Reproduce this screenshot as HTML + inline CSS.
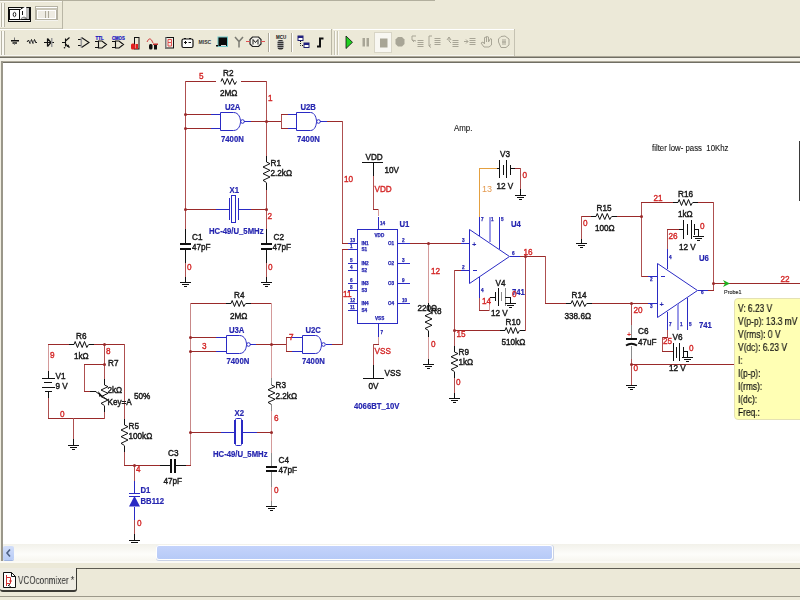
<!DOCTYPE html>
<html><head><meta charset="utf-8">
<style>
html,body{margin:0;padding:0;width:800px;height:600px;overflow:hidden;background:#ECE9D8;font-family:"Liberation Sans",sans-serif;}
#root{position:relative;width:800px;height:600px;overflow:hidden;}
.a{position:absolute;}
svg text{font-family:"Liberation Sans",sans-serif;}
#probe{left:734px;top:298px;width:80px;height:122px;background:#FFFFB4;border:1px solid #E4E1B4;border-radius:4px;box-sizing:border-box;}
#probe div{will-change:transform;position:absolute;left:3px;font-size:10px;color:#111;-webkit-text-stroke:0.2px #111;transform-origin:0 0;transform:scaleX(0.84);white-space:nowrap;}
</style></head><body><div id="root">
<svg class="a" style="left:0;top:0" width="800" height="61" shape-rendering="crispEdges">
<rect x="0" y="0" width="800" height="61" fill="#ECE9D8"/>
<!-- row1 -->
<rect x="0" y="0" width="435" height="1" fill="#B2AF9E"/>
<rect x="0" y="1" width="62" height="1" fill="#FAF9F4"/>
<rect x="62" y="1" width="1" height="28" fill="#B9B6A5"/>
<rect x="0" y="28" width="62" height="1" fill="#C9C6B6"/>
<rect x="0" y="3" width="1" height="24" fill="#F8F6EE"/><rect x="1" y="3" width="1" height="24" fill="#B8B5A6"/><rect x="2" y="3" width="2" height="24" fill="#FAF9F3"/><rect x="4" y="3" width="1" height="24" fill="#B8B5A6"/>
<!-- toggle icon -->
<rect x="8" y="7" width="23" height="15" fill="#0C0C0C"/>
<rect x="9" y="8" width="12" height="1" fill="#F4F4F4"/>
<rect x="10" y="10" width="9" height="9" fill="#FFFFFF"/>
<rect x="9" y="20" width="21" height="1" fill="#F4F4F4"/>
<path d="M20,10 L25.5,6.5 L26.3,7 L26,18.5 L20,19.2 Z" fill="#FFFFFF" shape-rendering="auto"/>
<rect x="26" y="8" width="3" height="11" fill="#BDBDBD"/>
<rect x="22" y="11" width="1" height="4" fill="#111"/>
<path d="M21,18.5 L24,17 L27,18.5" stroke="#555" stroke-width="0.8" fill="none" shape-rendering="auto"/>
<ellipse cx="14.5" cy="14.5" rx="1.3" ry="2.2" stroke="#111" stroke-width="0.9" fill="none" shape-rendering="auto"/>
<!-- grayed icon -->
<rect x="35" y="6" width="23" height="15" fill="#B5B2A3"/>
<rect x="36" y="7" width="21" height="1" fill="#FFFFFF"/>
<rect x="36" y="8" width="21" height="2" fill="#C8C5B7"/>
<rect x="37" y="10" width="19" height="9" fill="#FFFFFF"/>
<rect x="38" y="11" width="17" height="7" fill="#EEECE3"/>
<rect x="45" y="11" width="1" height="7" fill="#ACA899"/><rect x="48" y="11" width="1" height="7" fill="#ACA899"/>
<rect x="35" y="20" width="23" height="1" fill="#F4F3EE"/>
<!-- row2 toolbar 2 -->
<rect x="0" y="29" width="331" height="1" fill="#FFFFFF"/>
<rect x="333" y="29" width="181" height="1" fill="#FFFFFF"/>
<rect x="331" y="29" width="1" height="27" fill="#B9B6A5"/>
<rect x="514" y="29" width="1" height="27" fill="#C5C2B2"/>
<rect x="0" y="55" width="514" height="1" fill="#F7F6F0"/>
<rect x="0" y="31" width="1" height="24" fill="#F8F6EE"/><rect x="1" y="31" width="1" height="24" fill="#B8B5A6"/><rect x="2" y="31" width="2" height="24" fill="#FAF9F3"/><rect x="4" y="31" width="1" height="24" fill="#B8B5A6"/>
<rect x="334" y="31" width="1" height="24" fill="#C6C3B3"/><rect x="335" y="31" width="1" height="24" fill="#FBFAF6"/><rect x="337" y="31" width="1" height="24" fill="#C6C3B3"/><rect x="338" y="31" width="1" height="24" fill="#FBFAF6"/>
<rect x="268" y="33" width="1" height="19" fill="#ACA899"/><rect x="269" y="33" width="1" height="19" fill="#FFFFFF"/>
<rect x="291" y="33" width="1" height="19" fill="#ACA899"/><rect x="292" y="33" width="1" height="19" fill="#FFFFFF"/>
<rect x="0" y="56" width="800" height="1" fill="#ACA899"/>
<rect x="0" y="57" width="800" height="1" fill="#716F64"/>
<rect x="0" y="58" width="800" height="3" fill="#F5F3EA"/>
<g shape-rendering="auto">
<!-- ground -->
<path d="M14.5,37.5 V40" stroke="#777" stroke-width="1"/>
<rect x="11" y="40" width="8" height="1.5" fill="#111"/>
<rect x="12.5" y="42.3" width="4.5" height="1.4" fill="#111"/>
<path d="M14.5,43.5 V45" stroke="#888" stroke-width="1"/>
<!-- resistor -->
<polyline points="27,42 28.5,40 30,43.5 31.5,39.5 33,43.5 34.5,39.5 36,43 37,42" stroke="#1A1A1A" stroke-width="1" fill="none"/><path d="M30.5,40.5 V43 M33.5,40.5 V43" stroke="#999" stroke-width="0.8"/>
<!-- diode -->
<path d="M44,42.5 H54 M47.5,38.5 V46.5 M47.5,38.5 L51,42.5 L47.5,46.5" stroke="#111" stroke-width="1.2" fill="none"/>
<rect x="51" y="38" width="1.5" height="9" fill="#999"/>
<!-- transistor -->
<path d="M62,42.5 H65.5 M65.5,38.5 V46.5 M65.5,41 L69.5,37.5 M65.5,44 L69.5,47.5" stroke="#111" stroke-width="1.1" fill="none"/>
<path d="M69.5,47.5 L66.5,46.5 L68.5,44.5 Z" fill="#111"/>
<circle cx="64.5" cy="47.8" r="0.8" fill="#111"/>
<!-- opamp -->
<path d="M78,39.5 H81.5 M78,45.5 H81.5 M81.5,37.5 L89,42.5 L81.5,47.5" stroke="#111" stroke-width="1.1" fill="none"/>
<rect x="80.5" y="37.5" width="1.6" height="10" fill="#9A9A9A"/>
<!-- TTL -->
<text x="95.5" y="40" font-size="5" font-weight="bold" fill="#1010C0" font-family="Liberation Sans" stroke="#1010C0" stroke-width="0.2" transform="translate(95.5,0) scale(0.9,1) translate(-95.5,0)">TTL</text>
<path d="M95,41.5 H98.5 M95,47.5 H98.5 M98.5,41 H102 L106.5,44.5 L102,48 H98.5 Z" stroke="#111" stroke-width="1.1" fill="none"/>
<text x="112" y="40" font-size="5" font-weight="bold" fill="#1010C0" font-family="Liberation Sans" stroke="#1010C0" stroke-width="0.2" transform="translate(112,0) scale(0.85,1) translate(-112,0)">CMOS</text>
<path d="M112,41.5 H115.5 M112,47.5 H115.5 M115.5,41 H119 L123.5,44.5 L119,48 H115.5 Z" stroke="#111" stroke-width="1.1" fill="none"/>
<!-- indicator -->
<rect x="134.5" y="37.5" width="4.5" height="11.5" fill="none" stroke="#111" stroke-width="1"/>
<rect x="131" y="43.5" width="4" height="6" rx="1.5" fill="#E02020"/>
<rect x="135.5" y="44" width="2.5" height="5" fill="#E02020"/>
<!-- relay -->
<path d="M147,42 Q150,35 153,43" stroke="#D04040" stroke-width="1" fill="none"/>
<rect x="149" y="44" width="3.5" height="5.5" rx="1.5" fill="#111"/>
<rect x="154" y="44" width="3" height="5.5" fill="#111"/><rect x="153" y="43.5" width="5" height="1.5" fill="#C03030"/>
<!-- 7seg -->
<rect x="165.5" y="37.5" width="8" height="10.5" fill="#F0EEE6" stroke="#111" stroke-width="1"/>
<rect x="165" y="37" width="1.5" height="11.5" fill="#777"/>
<path d="M168,39.5 H171.5 V42.5 H168 Z M168,42.5 V46 H171.5 V42.5" stroke="#E04040" stroke-width="0.9" fill="none"/>
<!-- battery box -->
<rect x="182" y="39" width="11" height="8.5" rx="1.5" fill="#fff" stroke="#111" stroke-width="1.2"/>
<path d="M184,38.5 H186 M189,38.5 H191 M184,42.5 H187 M185.5,41 V44 M188.5,42.5 H191" stroke="#111" stroke-width="1"/>
<!-- MISC -->
<text x="198.5" y="44" font-size="6.2" font-weight="bold" fill="#333" font-family="Liberation Sans" transform="translate(198.5,0) scale(0.82,1) translate(-198.5,0)">MISC</text>
<!-- black square -->
<rect x="218" y="37" width="9.5" height="9.5" fill="#0A0A0A" stroke="#6FC8C8" stroke-width="1"/>
<rect x="221" y="45" width="5" height="1" fill="#ddd"/>
<rect x="216" y="45" width="2" height="1.5" fill="#111"/>
<!-- antenna -->
<path d="M235,37 L239,41.5 L243,37 M239,41.5 V47.5" stroke="#7A7A72" stroke-width="1.5" fill="none"/>
<!-- motor -->
<path d="M252.5,37 H258.5 L261,39.5 V44 L258.5,46.5 H252.5 L250,44 V39.5 Z" fill="#F3F2EC" stroke="#222" stroke-width="1.2"/>
<path d="M253,44.5 V39.5 L255.5,42.5 L258,39.5 V44.5" stroke="#222" stroke-width="1" fill="none"/>
<path d="M246,41.5 H250 M261,41.5 H265" stroke="#E05050" stroke-width="1"/>
<!-- MCU -->
<text x="276" y="39" font-size="4.5" font-weight="bold" fill="#111" font-family="Liberation Sans">MCU</text>
<rect x="277.5" y="40" width="6" height="9.5" rx="2" fill="#333"/>
<path d="M276.5,41.5 H284.5 M276.5,43.5 H284.5 M276.5,45.5 H284.5 M276.5,47.5 H284.5" stroke="#DDD" stroke-width="0.6"/>
<!-- hierarchy -->
<rect x="298" y="36" width="5" height="4.5" fill="#fff" stroke="#202070" stroke-width="1"/><rect x="298" y="36" width="5" height="2" fill="#202080"/>
<rect x="304" y="43" width="5" height="4.5" fill="#fff" stroke="#202070" stroke-width="1"/><rect x="304" y="43" width="5" height="2" fill="#202080"/>
<path d="M300.5,41 V45.5 H304" stroke="#111" stroke-width="1" stroke-dasharray="1,1" fill="none"/>
<!-- step -->
<path d="M317,46.5 H320 V38.5 H323.5" stroke="#111" stroke-width="2" fill="none"/>
<!-- play -->
<path d="M346,36 L352.5,42.3 L346,48.5 Z" fill="#1FD11F" stroke="#111" stroke-width="0.8"/>
<!-- pause -->
<rect x="362.5" y="38" width="2.5" height="8.5" fill="#A8A596"/><rect x="366.5" y="38" width="2.5" height="8.5" fill="#A8A596"/>
<!-- stop pressed -->
<rect x="374.5" y="32.5" width="17" height="20" fill="#F8F7F2" stroke="#D8D5C6" stroke-width="1"/>
<rect x="380" y="38.5" width="7.5" height="9" fill="#A8A596"/>
<!-- octagon -->
<path d="M398,37 H402 L404.5,39.5 V44 L402,46.5 H398 L395.5,44 V39.5 Z" fill="#A8A596"/>
<!-- debug icons -->
<g stroke="#A8A596" stroke-width="1" fill="none">
<path d="M416,36 H412 V40 L414,42 M412,40 L416,41"/>
<path d="M417.5,40.5 H423.5 M417.5,42.5 H423.5 M417.5,44.5 H423.5 M417.5,46.5 H423.5"/>
<path d="M432,36 H429 V46 L431,47.5 M429,46 L431,44.5"/>
<path d="M434.5,38.5 H440.5 M434.5,40.5 H440.5 M434.5,42.5 H440.5 M434.5,44.5 H440.5"/>
<path d="M447,40 L449,37 L451,40 M449,37 V41 L451,43"/>
<path d="M452.5,40.5 H458.5 M452.5,42.5 H458.5 M452.5,44.5 H458.5 M452.5,46.5 H458.5"/>
<path d="M464,41.5 H468 M466,39.5 L468,41.5 L466,43.5"/>
<path d="M469.5,38.5 H475.5 M469.5,40.5 H475.5 M469.5,42.5 H475.5 M469.5,44.5 H475.5"/>
<path d="M484,47 L481,43 L483,42 L484.5,44 V37.5 L486.5,37 V42 V36.5 L488.5,37 V42 L490.5,38.5 L491.5,39 V45 L489,47 Z"/>
<path d="M501,47.5 L498.5,42 V39 L501,36.5 L505,36 L509,39 V45 L506,47.5 Z M503,39 V45 M505,39 V45 M502,42 L506,42"/>
</g>
</g>
</svg>

<div class="a" style="left:0;top:61px;width:800px;height:2px;background:#ACA899"></div>
<div class="a" style="left:0;top:62px;width:800px;height:1px;background:#716F64"></div>
<div class="a" style="left:0;top:61px;width:1px;height:501px;background:#F1EFE2"></div>
<div class="a" style="left:1px;top:61px;width:2px;height:501px;background:#9A978A"></div>
<div class="a" style="left:3px;top:63px;width:797px;height:481px;background:#fff"></div>
<svg class="a" style="left:0;top:0;will-change:transform" width="800" height="544" viewBox="0 0 800 544" shape-rendering="auto">
<defs><clipPath id="cp"><rect x="3" y="63" width="797" height="481"/></clipPath></defs>
<g clip-path="url(#cp)">
<rect x="185" y="81" width="31" height="1" fill="#9A2A2A"/>
<polyline points="221,81.5 222.25,78.5 224.75,84.5 227.25,78.5 229.75,84.5 232.25,78.5 234.75,84.5 236.5,81.5" stroke="#101010" stroke-width="1" fill="none" stroke-linejoin="miter"/>
<rect x="241" y="81" width="26" height="1" fill="#9A2A2A"/>
<rect x="185" y="81" width="1" height="148" fill="#AE5050"/>
<rect x="185" y="229" width="1" height="15" fill="#101010"/>
<rect x="186" y="114" width="25" height="1" fill="#9A2A2A"/>
<rect x="211" y="114" width="9" height="1" fill="#2A2AC4"/>
<rect x="186" y="128" width="25" height="1" fill="#9A2A2A"/>
<rect x="211" y="128" width="9" height="1" fill="#2A2AC4"/>
<path d="M220.5,112.5 H233.5 C239,112.5 240.5,118.5 240.5,121.5 C240.5,124.5 239,130.5 233.5,130.5 H220.5 Z" stroke="#2A2AC4" fill="none" stroke-width="1"/>
<circle cx="242.5" cy="121.5" r="1.8" stroke="#2A2AC4" fill="none" stroke-width="1"/>
<rect x="244" y="121" width="7" height="1" fill="#2A2AC4"/>
<rect x="251" y="121" width="31" height="1" fill="#9A2A2A"/>
<rect x="266" y="81" width="1" height="75" fill="#AE5050"/>
<rect x="266" y="156" width="1" height="6" fill="#101010"/>
<polyline points="266.5,162 270.0,163.66666666666666 263.0,167.0 270.0,170.33333333333334 263.0,173.66666666666666 270.0,177.0 263.0,180.33333333333334 266.5,182.5" stroke="#101010" stroke-width="1" fill="none" stroke-linejoin="miter"/>
<rect x="266" y="183" width="1" height="7" fill="#101010"/>
<rect x="266" y="190" width="1" height="39" fill="#AE5050"/>
<rect x="266" y="229" width="1" height="15" fill="#101010"/>
<rect x="281" y="114" width="1" height="15" fill="#AE5050"/>
<rect x="281" y="114" width="7" height="1" fill="#9A2A2A"/>
<rect x="288" y="114" width="8" height="1" fill="#2A2AC4"/>
<rect x="281" y="128" width="7" height="1" fill="#9A2A2A"/>
<rect x="288" y="128" width="8" height="1" fill="#2A2AC4"/>
<path d="M296.5,112.5 H310.5 C315,112.5 316.5,118.5 316.5,121.5 C316.5,124.5 315,130.5 310.5,130.5 H296.5 Z" stroke="#2A2AC4" fill="none" stroke-width="1"/>
<circle cx="318.5" cy="121.5" r="1.8" stroke="#2A2AC4" fill="none" stroke-width="1"/>
<rect x="320" y="121" width="7" height="1" fill="#2A2AC4"/>
<rect x="327" y="121" width="16" height="1" fill="#9A2A2A"/>
<rect x="342" y="121" width="1" height="123" fill="#AE5050"/>
<rect x="342" y="243" width="6" height="1" fill="#9A2A2A"/>
<rect x="185" y="209" width="31" height="1" fill="#9A2A2A"/>
<rect x="216" y="209" width="14" height="1" fill="#2A2AC4"/>
<rect x="229" y="198" width="1" height="22" fill="#2A2AC4"/>
<rect x="238" y="198" width="1" height="22" fill="#2A2AC4"/>
<rect x="231.5" y="195.5" width="4" height="27" stroke="#2A2AC4" fill="none"/>
<rect x="239" y="209" width="12" height="1" fill="#2A2AC4"/>
<rect x="251" y="209" width="16" height="1" fill="#9A2A2A"/>
<rect x="180" y="243" width="11" height="2" fill="#101010"/>
<rect x="180" y="248" width="11" height="2" fill="#101010"/>
<rect x="185" y="250" width="1" height="13" fill="#101010"/>
<rect x="185" y="263" width="1" height="14" fill="#AE5050"/>
<rect x="185" y="277" width="1" height="6" fill="#101010"/>
<rect x="180" y="282" width="11" height="1" fill="#101010"/>
<rect x="182" y="284" width="7" height="1" fill="#101010"/>
<rect x="184" y="286" width="3" height="1" fill="#101010"/>
<rect x="261" y="243" width="11" height="2" fill="#101010"/>
<rect x="261" y="248" width="11" height="2" fill="#101010"/>
<rect x="266" y="250" width="1" height="13" fill="#101010"/>
<rect x="266" y="263" width="1" height="14" fill="#AE5050"/>
<rect x="266" y="277" width="1" height="6" fill="#101010"/>
<rect x="261" y="282" width="11" height="1" fill="#101010"/>
<rect x="263" y="284" width="7" height="1" fill="#101010"/>
<rect x="265" y="286" width="3" height="1" fill="#101010"/>
<text transform="translate(199,78.5) scale(0.87,1)" fill="#D42828" font-size="9.4" stroke="#D42828" stroke-width="0.4">5</text>
<text transform="translate(223,75.5) scale(0.87,1)" fill="#1A1A1A" font-size="9.4" stroke="#1A1A1A" stroke-width="0.45">R2</text>
<text transform="translate(220,95.5) scale(0.87,1)" fill="#1A1A1A" font-size="9.4" stroke="#1A1A1A" stroke-width="0.45">2MΩ</text>
<text transform="translate(268,100.5) scale(0.87,1)" fill="#D42828" font-size="9.4" stroke="#D42828" stroke-width="0.4">1</text>
<text transform="translate(225,110) scale(0.86,1)" fill="#2626B0" font-size="9" font-weight="bold" stroke="#2626B0" stroke-width="0.2">U2A</text>
<text transform="translate(221,141.5) scale(0.86,1)" fill="#2626B0" font-size="9" font-weight="bold" stroke="#2626B0" stroke-width="0.2">7400N</text>
<text transform="translate(300.5,110) scale(0.86,1)" fill="#2626B0" font-size="9" font-weight="bold" stroke="#2626B0" stroke-width="0.2">U2B</text>
<text transform="translate(297,141.5) scale(0.86,1)" fill="#2626B0" font-size="9" font-weight="bold" stroke="#2626B0" stroke-width="0.2">7400N</text>
<text transform="translate(270.5,165.5) scale(0.87,1)" fill="#1A1A1A" font-size="9.4" stroke="#1A1A1A" stroke-width="0.45">R1</text>
<text transform="translate(270.5,176) scale(0.87,1)" fill="#1A1A1A" font-size="9.4" stroke="#1A1A1A" stroke-width="0.45">2.2kΩ</text>
<text transform="translate(229.5,192.5) scale(0.86,1)" fill="#2626B0" font-size="9" font-weight="bold" stroke="#2626B0" stroke-width="0.2">X1</text>
<text transform="translate(267.5,218.5) scale(0.87,1)" fill="#D42828" font-size="9.4" stroke="#D42828" stroke-width="0.4">2</text>
<text transform="translate(209,234) scale(0.86,1)" fill="#2626B0" font-size="9" font-weight="bold" stroke="#2626B0" stroke-width="0.2">HC-49/U_5MHz</text>
<text transform="translate(192,240) scale(0.87,1)" fill="#1A1A1A" font-size="9.4" stroke="#1A1A1A" stroke-width="0.45">C1</text>
<text transform="translate(192,249.5) scale(0.87,1)" fill="#1A1A1A" font-size="9.4" stroke="#1A1A1A" stroke-width="0.45">47pF</text>
<text transform="translate(187,269.5) scale(0.87,1)" fill="#D42828" font-size="9.4" stroke="#D42828" stroke-width="0.4">0</text>
<text transform="translate(273.5,240) scale(0.87,1)" fill="#1A1A1A" font-size="9.4" stroke="#1A1A1A" stroke-width="0.45">C2</text>
<text transform="translate(272.5,249.5) scale(0.87,1)" fill="#1A1A1A" font-size="9.4" stroke="#1A1A1A" stroke-width="0.45">47pF</text>
<text transform="translate(268,269.5) scale(0.87,1)" fill="#D42828" font-size="9.4" stroke="#D42828" stroke-width="0.4">0</text>
<text transform="translate(344,182) scale(0.87,1)" fill="#D42828" font-size="9.4" stroke="#D42828" stroke-width="0.4">10</text>
<rect x="190" y="303" width="36" height="1" fill="#9A2A2A"/>
<rect x="226" y="303" width="5" height="1" fill="#101010"/>
<polyline points="231,303.5 232.16666666666666,300.5 234.5,306.5 236.83333333333334,300.5 239.16666666666666,306.5 241.5,300.5 243.83333333333334,306.5 245.5,303.5" stroke="#101010" stroke-width="1" fill="none" stroke-linejoin="miter"/>
<rect x="246" y="303" width="5" height="1" fill="#101010"/>
<rect x="251" y="303" width="21" height="1" fill="#9A2A2A"/>
<rect x="190" y="303" width="1" height="163" fill="#C88888"/>
<rect x="191" y="337" width="25" height="1" fill="#9A2A2A"/>
<rect x="216" y="337" width="10" height="1" fill="#2A2AC4"/>
<rect x="191" y="351" width="25" height="1" fill="#9A2A2A"/>
<rect x="216" y="351" width="10" height="1" fill="#2A2AC4"/>
<path d="M226.5,335.5 H239.5 C245,335.5 246.5,341.5 246.5,344.5 C246.5,347.5 245,353.5 239.5,353.5 H226.5 Z" stroke="#2A2AC4" fill="none" stroke-width="1"/>
<circle cx="248.5" cy="344.5" r="1.8" stroke="#2A2AC4" fill="none" stroke-width="1"/>
<rect x="250" y="344" width="6" height="1" fill="#2A2AC4"/>
<rect x="256" y="344" width="31" height="1" fill="#9A2A2A"/>
<rect x="271" y="303" width="1" height="75" fill="#D49A9A"/>
<rect x="271" y="378" width="1" height="7" fill="#8C8C8C"/>
<polyline points="271.5,385 275.0,386.5833333333333 268.0,389.75 275.0,392.9166666666667 268.0,396.0833333333333 275.0,399.25 268.0,402.4166666666667 271.5,404.5" stroke="#101010" stroke-width="1" fill="none" stroke-linejoin="miter"/>
<rect x="271" y="405" width="1" height="6" fill="#8C8C8C"/>
<rect x="271" y="411" width="1" height="42" fill="#D49A9A"/>
<rect x="271" y="453" width="1" height="14" fill="#8C8C8C"/>
<rect x="286" y="337" width="1" height="15" fill="#AE5050"/>
<rect x="286" y="337" width="6" height="1" fill="#9A2A2A"/>
<rect x="292" y="337" width="10" height="1" fill="#2A2AC4"/>
<rect x="286" y="351" width="6" height="1" fill="#9A2A2A"/>
<rect x="292" y="351" width="10" height="1" fill="#2A2AC4"/>
<path d="M302.5,335.5 H315.5 C320,335.5 321.5,341.5 321.5,344.5 C321.5,347.5 320,353.5 315.5,353.5 H302.5 Z" stroke="#2A2AC4" fill="none" stroke-width="1"/>
<circle cx="323.5" cy="344.5" r="1.8" stroke="#2A2AC4" fill="none" stroke-width="1"/>
<rect x="326" y="344" width="6" height="1" fill="#2A2AC4"/>
<rect x="332" y="344" width="11" height="1" fill="#9A2A2A"/>
<rect x="342" y="249" width="1" height="96" fill="#AE5050"/>
<rect x="342" y="249" width="6" height="1" fill="#9A2A2A"/>
<rect x="190" y="432" width="31" height="1" fill="#9A2A2A"/>
<rect x="221" y="432" width="13" height="1" fill="#2A2AC4"/>
<rect x="235.5" y="418.5" width="6" height="27" rx="1" stroke="#2A2AC4" fill="none"/>
<rect x="234" y="420" width="1" height="24" fill="#2A2AC4"/>
<rect x="242" y="420" width="1" height="24" fill="#2A2AC4"/>
<rect x="243" y="432" width="14" height="1" fill="#2A2AC4"/>
<rect x="257" y="432" width="15" height="1" fill="#9A2A2A"/>
<rect x="266" y="466" width="11" height="2" fill="#101010"/>
<rect x="266" y="470" width="11" height="2" fill="#101010"/>
<rect x="271" y="472" width="1" height="15" fill="#8C8C8C"/>
<rect x="271" y="487" width="1" height="14" fill="#D49A9A"/>
<rect x="271" y="501" width="1" height="6" fill="#8C8C8C"/>
<rect x="266" y="506" width="11" height="1" fill="#101010"/>
<rect x="268" y="508" width="7" height="1" fill="#101010"/>
<rect x="270" y="510" width="3" height="1" fill="#101010"/>
<text transform="translate(234,297.5) scale(0.87,1)" fill="#1A1A1A" font-size="9.4" stroke="#1A1A1A" stroke-width="0.45">R4</text>
<text transform="translate(230,319) scale(0.87,1)" fill="#1A1A1A" font-size="9.4" stroke="#1A1A1A" stroke-width="0.45">2MΩ</text>
<text transform="translate(229,333) scale(0.86,1)" fill="#2626B0" font-size="9" font-weight="bold" stroke="#2626B0" stroke-width="0.2">U3A</text>
<text transform="translate(202,349) scale(0.87,1)" fill="#D42828" font-size="9.4" stroke="#D42828" stroke-width="0.4">3</text>
<text transform="translate(226.5,363.5) scale(0.86,1)" fill="#2626B0" font-size="9" font-weight="bold" stroke="#2626B0" stroke-width="0.2">7400N</text>
<text transform="translate(305.5,332.5) scale(0.86,1)" fill="#2626B0" font-size="9" font-weight="bold" stroke="#2626B0" stroke-width="0.2">U2C</text>
<text transform="translate(289,339.5) scale(0.87,1)" fill="#D42828" font-size="9.4" stroke="#D42828" stroke-width="0.4">7</text>
<text transform="translate(302,363.5) scale(0.86,1)" fill="#2626B0" font-size="9" font-weight="bold" stroke="#2626B0" stroke-width="0.2">7400N</text>
<text transform="translate(275.5,388) scale(0.87,1)" fill="#1A1A1A" font-size="9.4" stroke="#1A1A1A" stroke-width="0.45">R3</text>
<text transform="translate(275.5,399) scale(0.87,1)" fill="#1A1A1A" font-size="9.4" stroke="#1A1A1A" stroke-width="0.45">2.2kΩ</text>
<text transform="translate(274,420.5) scale(0.87,1)" fill="#D42828" font-size="9.4" stroke="#D42828" stroke-width="0.4">6</text>
<text transform="translate(234.5,415.5) scale(0.86,1)" fill="#2626B0" font-size="9" font-weight="bold" stroke="#2626B0" stroke-width="0.2">X2</text>
<text transform="translate(213,456.5) scale(0.86,1)" fill="#2626B0" font-size="9" font-weight="bold" stroke="#2626B0" stroke-width="0.2">HC-49/U_5MHz</text>
<text transform="translate(278.5,462.5) scale(0.87,1)" fill="#1A1A1A" font-size="9.4" stroke="#1A1A1A" stroke-width="0.45">C4</text>
<text transform="translate(278.5,472.5) scale(0.87,1)" fill="#1A1A1A" font-size="9.4" stroke="#1A1A1A" stroke-width="0.45">47pF</text>
<text transform="translate(274,493) scale(0.87,1)" fill="#D42828" font-size="9.4" stroke="#D42828" stroke-width="0.4">0</text>
<text transform="translate(343,297) scale(0.87,1)" fill="#D42828" font-size="9.4" stroke="#D42828" stroke-width="0.4">11</text>
<rect x="48" y="344" width="1" height="27" fill="#D49A9A"/>
<rect x="48" y="371" width="1" height="8" fill="#101010"/>
<rect x="42" y="378" width="13" height="1" fill="#101010"/>
<rect x="44" y="382" width="8" height="1" fill="#101010"/>
<rect x="42" y="387" width="13" height="1" fill="#101010"/>
<rect x="45" y="391" width="7" height="1" fill="#101010"/>
<rect x="48" y="392" width="1" height="6" fill="#101010"/>
<rect x="48" y="398" width="1" height="21" fill="#AE5050"/>
<rect x="48" y="418" width="57" height="1" fill="#9A2A2A"/>
<rect x="73" y="418" width="1" height="21" fill="#AE5050"/>
<rect x="73" y="439" width="1" height="7" fill="#101010"/>
<rect x="68" y="445" width="11" height="1" fill="#101010"/>
<rect x="70" y="447" width="7" height="1" fill="#101010"/>
<rect x="72" y="449" width="3" height="1" fill="#101010"/>
<rect x="48" y="344" width="21" height="1" fill="#9A2A2A"/>
<rect x="69" y="344" width="5" height="1" fill="#101010"/>
<polyline points="74,344.5 75.16666666666667,341.5 77.5,347.5 79.83333333333333,341.5 82.16666666666667,347.5 84.5,341.5 86.83333333333333,347.5 88.5,344.5" stroke="#101010" stroke-width="1" fill="none" stroke-linejoin="miter"/>
<rect x="89" y="344" width="5" height="1" fill="#101010"/>
<rect x="94" y="344" width="31" height="1" fill="#9A2A2A"/>
<rect x="104" y="344" width="1" height="35" fill="#AE5050"/>
<rect x="104" y="379" width="1" height="6" fill="#101010"/>
<polyline points="104.5,385 108.0,386.6666666666667 101.0,390.0 108.0,393.3333333333333 101.0,396.6666666666667 108.0,400.0 101.0,403.3333333333333 104.5,405.5" stroke="#101010" stroke-width="1" fill="none" stroke-linejoin="miter"/>
<rect x="104" y="406" width="1" height="6" fill="#101010"/>
<rect x="104" y="412" width="1" height="7" fill="#AE5050"/>
<rect x="84" y="364" width="1" height="28" fill="#AE5050"/>
<rect x="84" y="364" width="21" height="1" fill="#9A2A2A"/>
<rect x="84" y="391" width="6" height="1" fill="#9A2A2A"/>
<rect x="90" y="391" width="6" height="1" fill="#101010"/>
<polyline points="95.5,391.5 107,399.5" stroke="#101010" stroke-width="1" fill="none" stroke-linejoin="miter"/>
<path d="M98,391 L102,395.5 L99.5,397 Z" fill="#101010"/>
<rect x="124" y="344" width="1" height="75" fill="#AE5050"/>
<rect x="124" y="419" width="1" height="6" fill="#101010"/>
<polyline points="124.5,425 128.0,426.6666666666667 121.0,430.0 128.0,433.3333333333333 121.0,436.6666666666667 128.0,440.0 121.0,443.3333333333333 124.5,445.5" stroke="#101010" stroke-width="1" fill="none" stroke-linejoin="miter"/>
<rect x="124" y="446" width="1" height="6" fill="#101010"/>
<rect x="124" y="452" width="1" height="14" fill="#AE5050"/>
<rect x="124" y="465" width="36" height="1" fill="#9A2A2A"/>
<rect x="160" y="465" width="10" height="1" fill="#101010"/>
<rect x="170" y="459" width="2" height="14" fill="#101010"/>
<rect x="174" y="459" width="2" height="14" fill="#101010"/>
<rect x="176" y="465" width="10" height="1" fill="#101010"/>
<rect x="186" y="465" width="5" height="1" fill="#9A2A2A"/>
<rect x="134" y="465" width="1" height="16" fill="#AE5050"/>
<rect x="134" y="481" width="1" height="12" fill="#2A2AC4"/>
<rect x="129" y="493" width="11" height="1" fill="#2A2AC4"/>
<rect x="129" y="496" width="11" height="1" fill="#2A2AC4"/>
<path d="M134.5,496 L140,506.5 L129,506.5 Z" fill="#2A2AC4"/>
<rect x="134" y="507" width="1" height="13" fill="#2A2AC4"/>
<rect x="134" y="520" width="1" height="14" fill="#AE5050"/>
<rect x="134" y="534" width="1" height="7" fill="#101010"/>
<rect x="129" y="540" width="11" height="1" fill="#101010"/>
<rect x="131" y="542" width="7" height="1" fill="#101010"/>
<rect x="133" y="544" width="3" height="1" fill="#101010"/>
<text transform="translate(76,338.5) scale(0.87,1)" fill="#1A1A1A" font-size="9.4" stroke="#1A1A1A" stroke-width="0.45">R6</text>
<text transform="translate(74,359) scale(0.87,1)" fill="#1A1A1A" font-size="9.4" stroke="#1A1A1A" stroke-width="0.45">1kΩ</text>
<text transform="translate(50,357.5) scale(0.87,1)" fill="#D42828" font-size="9.4" stroke="#D42828" stroke-width="0.4">9</text>
<text transform="translate(106,353.5) scale(0.87,1)" fill="#D42828" font-size="9.4" stroke="#D42828" stroke-width="0.4">8</text>
<text transform="translate(108,365.5) scale(0.87,1)" fill="#1A1A1A" font-size="9.4" stroke="#1A1A1A" stroke-width="0.45">R7</text>
<text transform="translate(55.5,378.5) scale(0.87,1)" fill="#1A1A1A" font-size="9.4" stroke="#1A1A1A" stroke-width="0.45">V1</text>
<text transform="translate(55.5,388.5) scale(0.87,1)" fill="#1A1A1A" font-size="9.4" stroke="#1A1A1A" stroke-width="0.45">9 V</text>
<text transform="translate(107.5,392.5) scale(0.87,1)" fill="#1A1A1A" font-size="9.4" stroke="#1A1A1A" stroke-width="0.45">2kΩ</text>
<text transform="translate(107.5,404.5) scale(0.87,1)" fill="#1A1A1A" font-size="9.4" stroke="#1A1A1A" stroke-width="0.45">Key=A</text>
<text transform="translate(134,399) scale(0.87,1)" fill="#1A1A1A" font-size="9.4" stroke="#1A1A1A" stroke-width="0.45">50%</text>
<text transform="translate(60,416.5) scale(0.87,1)" fill="#D42828" font-size="9.4" stroke="#D42828" stroke-width="0.4">0</text>
<text transform="translate(128.5,428.5) scale(0.87,1)" fill="#1A1A1A" font-size="9.4" stroke="#1A1A1A" stroke-width="0.45">R5</text>
<text transform="translate(128.5,439) scale(0.87,1)" fill="#1A1A1A" font-size="9.4" stroke="#1A1A1A" stroke-width="0.45">100kΩ</text>
<text transform="translate(136,472) scale(0.87,1)" fill="#D42828" font-size="9.4" stroke="#D42828" stroke-width="0.4">4</text>
<text transform="translate(168,455.5) scale(0.87,1)" fill="#1A1A1A" font-size="9.4" stroke="#1A1A1A" stroke-width="0.45">C3</text>
<text transform="translate(163.5,483.5) scale(0.87,1)" fill="#1A1A1A" font-size="9.4" stroke="#1A1A1A" stroke-width="0.45">47pF</text>
<text transform="translate(140.5,492.5) scale(0.86,1)" fill="#2626B0" font-size="9" font-weight="bold" stroke="#2626B0" stroke-width="0.2">D1</text>
<text transform="translate(140.5,503.5) scale(0.86,1)" fill="#2626B0" font-size="9" font-weight="bold" stroke="#2626B0" stroke-width="0.2">BB112</text>
<text transform="translate(137,525.5) scale(0.87,1)" fill="#D42828" font-size="9.4" stroke="#D42828" stroke-width="0.4">0</text>
<rect x="357.5" y="229.5" width="40" height="94" stroke="#2A2AC4" fill="none"/>
<rect x="362" y="162" width="21" height="1" fill="#101010"/>
<rect x="373" y="162" width="1" height="14" fill="#101010"/>
<rect x="373" y="176" width="1" height="34" fill="#AE5050"/>
<rect x="373" y="209" width="6" height="1" fill="#9A2A2A"/>
<rect x="378" y="209" width="1" height="7" fill="#D49A9A"/>
<rect x="378" y="217" width="1" height="13" fill="#2A2AC4"/>
<rect x="378" y="323" width="1" height="15" fill="#2A2AC4"/>
<rect x="378" y="337" width="1" height="8" fill="#D49A9A"/>
<rect x="373" y="344" width="6" height="1" fill="#9A2A2A"/>
<rect x="373" y="344" width="1" height="21" fill="#AE5050"/>
<rect x="373" y="365" width="1" height="14" fill="#101010"/>
<rect x="363" y="378" width="21" height="1" fill="#101010"/>
<rect x="348" y="243" width="10" height="1" fill="#2A2AC4"/>
<rect x="348" y="249" width="10" height="1" fill="#2A2AC4"/>
<rect x="348" y="263" width="10" height="1" fill="#2A2AC4"/>
<rect x="348" y="270" width="10" height="1" fill="#2A2AC4"/>
<rect x="348" y="283" width="10" height="1" fill="#2A2AC4"/>
<rect x="348" y="290" width="10" height="1" fill="#2A2AC4"/>
<rect x="348" y="303" width="10" height="1" fill="#2A2AC4"/>
<rect x="348" y="310" width="10" height="1" fill="#2A2AC4"/>
<rect x="398" y="243" width="12" height="1" fill="#2A2AC4"/>
<rect x="398" y="263" width="12" height="1" fill="#2A2AC4"/>
<rect x="398" y="283" width="12" height="1" fill="#2A2AC4"/>
<rect x="398" y="303" width="12" height="1" fill="#2A2AC4"/>
<text transform="translate(365.5,160) scale(0.87,1)" fill="#1A1A1A" font-size="9.4" stroke="#1A1A1A" stroke-width="0.45">VDD</text>
<text transform="translate(384.5,173) scale(0.87,1)" fill="#1A1A1A" font-size="9.4" stroke="#1A1A1A" stroke-width="0.45">10V</text>
<text transform="translate(374.5,192) scale(0.87,1)" fill="#D42828" font-size="9.4" stroke="#D42828" stroke-width="0.4">VDD</text>
<text transform="translate(399.5,227) scale(0.86,1)" fill="#2626B0" font-size="9" font-weight="bold" stroke="#2626B0" stroke-width="0.2">U1</text>
<text transform="translate(374.5,353.5) scale(0.87,1)" fill="#D42828" font-size="9.4" stroke="#D42828" stroke-width="0.4">VSS</text>
<text transform="translate(384.5,375.5) scale(0.87,1)" fill="#1A1A1A" font-size="9.4" stroke="#1A1A1A" stroke-width="0.45">VSS</text>
<text transform="translate(368.5,388.5) scale(0.87,1)" fill="#1A1A1A" font-size="9.4" stroke="#1A1A1A" stroke-width="0.45">0V</text>
<text transform="translate(354,409) scale(0.86,1)" fill="#2626B0" font-size="9" font-weight="bold" stroke="#2626B0" stroke-width="0.2">4066BT_10V</text>
<text transform="translate(380,225) scale(1.0,1)" fill="#2626B0" font-size="4.6" font-weight="bold" stroke="#2626B0" stroke-width="0.25">14</text>
<text transform="translate(374.5,237) scale(1.0,1)" fill="#2626B0" font-size="4.6" font-weight="bold" stroke="#2626B0" stroke-width="0.25">VDD</text>
<text transform="translate(375,320) scale(1.0,1)" fill="#2626B0" font-size="4.6" font-weight="bold" stroke="#2626B0" stroke-width="0.25">VSS</text>
<text transform="translate(380.5,334) scale(1.0,1)" fill="#2626B0" font-size="4.6" font-weight="bold" stroke="#2626B0" stroke-width="0.25">7</text>
<text transform="translate(361.5,245) scale(1.0,1)" fill="#2626B0" font-size="4.6" font-weight="bold" stroke="#2626B0" stroke-width="0.25">IN1</text>
<text transform="translate(350,242) scale(1.0,1)" fill="#2626B0" font-size="4.6" font-weight="bold" stroke="#2626B0" stroke-width="0.25">13</text>
<text transform="translate(361.5,251) scale(1.0,1)" fill="#2626B0" font-size="4.6" font-weight="bold" stroke="#2626B0" stroke-width="0.25">S1</text>
<text transform="translate(350,248) scale(1.0,1)" fill="#2626B0" font-size="4.6" font-weight="bold" stroke="#2626B0" stroke-width="0.25">1</text>
<text transform="translate(361.5,265) scale(1.0,1)" fill="#2626B0" font-size="4.6" font-weight="bold" stroke="#2626B0" stroke-width="0.25">IN2</text>
<text transform="translate(350,262) scale(1.0,1)" fill="#2626B0" font-size="4.6" font-weight="bold" stroke="#2626B0" stroke-width="0.25">5</text>
<text transform="translate(361.5,272) scale(1.0,1)" fill="#2626B0" font-size="4.6" font-weight="bold" stroke="#2626B0" stroke-width="0.25">S2</text>
<text transform="translate(350,269) scale(1.0,1)" fill="#2626B0" font-size="4.6" font-weight="bold" stroke="#2626B0" stroke-width="0.25">4</text>
<text transform="translate(361.5,285) scale(1.0,1)" fill="#2626B0" font-size="4.6" font-weight="bold" stroke="#2626B0" stroke-width="0.25">IN3</text>
<text transform="translate(350,282) scale(1.0,1)" fill="#2626B0" font-size="4.6" font-weight="bold" stroke="#2626B0" stroke-width="0.25">6</text>
<text transform="translate(361.5,292) scale(1.0,1)" fill="#2626B0" font-size="4.6" font-weight="bold" stroke="#2626B0" stroke-width="0.25">S3</text>
<text transform="translate(350,289) scale(1.0,1)" fill="#2626B0" font-size="4.6" font-weight="bold" stroke="#2626B0" stroke-width="0.25">8</text>
<text transform="translate(361.5,305) scale(1.0,1)" fill="#2626B0" font-size="4.6" font-weight="bold" stroke="#2626B0" stroke-width="0.25">IN4</text>
<text transform="translate(350,302) scale(1.0,1)" fill="#2626B0" font-size="4.6" font-weight="bold" stroke="#2626B0" stroke-width="0.25">12</text>
<text transform="translate(361.5,312) scale(1.0,1)" fill="#2626B0" font-size="4.6" font-weight="bold" stroke="#2626B0" stroke-width="0.25">S4</text>
<text transform="translate(350,309) scale(1.0,1)" fill="#2626B0" font-size="4.6" font-weight="bold" stroke="#2626B0" stroke-width="0.25">11</text>
<text transform="translate(388,245) scale(1.0,1)" fill="#2626B0" font-size="4.6" font-weight="bold" stroke="#2626B0" stroke-width="0.25">O1</text>
<text transform="translate(402,242) scale(1.0,1)" fill="#2626B0" font-size="4.6" font-weight="bold" stroke="#2626B0" stroke-width="0.25">2</text>
<text transform="translate(388,265) scale(1.0,1)" fill="#2626B0" font-size="4.6" font-weight="bold" stroke="#2626B0" stroke-width="0.25">O2</text>
<text transform="translate(402,262) scale(1.0,1)" fill="#2626B0" font-size="4.6" font-weight="bold" stroke="#2626B0" stroke-width="0.25">3</text>
<text transform="translate(388,285) scale(1.0,1)" fill="#2626B0" font-size="4.6" font-weight="bold" stroke="#2626B0" stroke-width="0.25">O3</text>
<text transform="translate(402,282) scale(1.0,1)" fill="#2626B0" font-size="4.6" font-weight="bold" stroke="#2626B0" stroke-width="0.25">9</text>
<text transform="translate(388,305) scale(1.0,1)" fill="#2626B0" font-size="4.6" font-weight="bold" stroke="#2626B0" stroke-width="0.25">O4</text>
<text transform="translate(402,302) scale(1.0,1)" fill="#2626B0" font-size="4.6" font-weight="bold" stroke="#2626B0" stroke-width="0.25">10</text>
<rect x="410" y="243" width="51" height="1" fill="#9A2A2A"/>
<rect x="461" y="243" width="9" height="1" fill="#2A2AC4"/>
<rect x="428" y="243" width="1" height="60" fill="#D49A9A"/>
<rect x="428" y="303" width="1" height="8" fill="#101010"/>
<polyline points="428.5,311 432.0,312.5833333333333 425.0,315.75 432.0,318.9166666666667 425.0,322.0833333333333 432.0,325.25 425.0,328.4166666666667 428.5,330.5" stroke="#101010" stroke-width="1" fill="none" stroke-linejoin="miter"/>
<rect x="428" y="331" width="1" height="6" fill="#101010"/>
<rect x="428" y="337" width="1" height="22" fill="#D49A9A"/>
<rect x="428" y="359" width="1" height="6" fill="#101010"/>
<rect x="423" y="364" width="11" height="1" fill="#101010"/>
<rect x="425" y="366" width="7" height="1" fill="#101010"/>
<rect x="427" y="368" width="3" height="1" fill="#101010"/>
<path d="M469.5,229.5 L509.5,256.5 L469.5,283.5 Z" stroke="#2A2AC4" fill="none"/>
<text transform="translate(472,246.5) scale(1.0,1)" fill="#2626B0" font-size="7.5" font-weight="bold">+</text>
<rect x="473" y="270" width="4" height="1" fill="#2A2AC4"/>
<rect x="455" y="270" width="6" height="1" fill="#9A2A2A"/>
<rect x="461" y="270" width="9" height="1" fill="#2A2AC4"/>
<rect x="454" y="270" width="1" height="76" fill="#AE5050"/>
<rect x="454" y="346" width="1" height="6" fill="#101010"/>
<polyline points="454.5,352 458.0,353.5833333333333 451.0,356.75 458.0,359.9166666666667 451.0,363.0833333333333 458.0,366.25 451.0,369.4166666666667 454.5,371.5" stroke="#101010" stroke-width="1" fill="none" stroke-linejoin="miter"/>
<rect x="454" y="372" width="1" height="6" fill="#101010"/>
<rect x="454" y="378" width="1" height="15" fill="#AE5050"/>
<rect x="454" y="393" width="1" height="6" fill="#101010"/>
<rect x="449" y="398" width="11" height="1" fill="#101010"/>
<rect x="451" y="400" width="7" height="1" fill="#101010"/>
<rect x="453" y="402" width="3" height="1" fill="#101010"/>
<rect x="455" y="330" width="45" height="1" fill="#9A2A2A"/>
<rect x="500" y="330" width="5" height="1" fill="#101010"/>
<polyline points="505,330.5 506.1666666666667,327.5 508.5,333.5 510.8333333333333,327.5 513.1666666666666,333.5 515.5,327.5 517.8333333333334,333.5 519.5,330.5" stroke="#101010" stroke-width="1" fill="none" stroke-linejoin="miter"/>
<rect x="520" y="330" width="5" height="1" fill="#101010"/>
<rect x="525" y="256" width="1" height="75" fill="#AE5050"/>
<rect x="510" y="256" width="10" height="1" fill="#2A2AC4"/>
<rect x="520" y="256" width="26" height="1" fill="#9A2A2A"/>
<rect x="545" y="256" width="1" height="48" fill="#AE5050"/>
<rect x="479" y="217" width="1" height="19" fill="#2A2AC4"/>
<rect x="489" y="217" width="2" height="25" fill="#9A9AE8"/>
<rect x="499" y="217" width="1" height="32" fill="#2A2AC4"/>
<rect x="479" y="169" width="1" height="48" fill="#E4A040"/>
<rect x="479" y="168" width="18" height="1" fill="#E4A040"/>
<rect x="497" y="168" width="3" height="1" fill="#101010"/>
<rect x="499" y="160" width="1" height="18" fill="#101010"/>
<rect x="503" y="165" width="1" height="10" fill="#101010"/>
<rect x="506" y="160" width="1" height="18" fill="#101010"/>
<rect x="510" y="165" width="1" height="10" fill="#101010"/>
<rect x="510" y="168" width="6" height="1" fill="#101010"/>
<rect x="515" y="168" width="6" height="1" fill="#9A2A2A"/>
<rect x="520" y="168" width="1" height="21" fill="#AE5050"/>
<rect x="520" y="189" width="1" height="7" fill="#101010"/>
<rect x="515" y="195" width="11" height="1" fill="#101010"/>
<rect x="517" y="197" width="7" height="1" fill="#101010"/>
<rect x="519" y="199" width="3" height="1" fill="#101010"/>
<rect x="479" y="277" width="1" height="21" fill="#2A2AC4"/>
<rect x="479" y="298" width="1" height="13" fill="#AE5050"/>
<rect x="479" y="310" width="11" height="1" fill="#9A2A2A"/>
<rect x="489" y="298" width="1" height="13" fill="#D49A9A"/>
<rect x="490" y="297" width="6" height="1" fill="#101010"/>
<rect x="495" y="292" width="1" height="9" fill="#101010"/>
<rect x="498" y="288" width="1" height="18" fill="#101010"/>
<rect x="501" y="292" width="1" height="9" fill="#8C8C8C"/>
<rect x="505" y="288" width="1" height="18" fill="#8C8C8C"/>
<rect x="505" y="297" width="6" height="1" fill="#101010"/>
<rect x="510" y="297" width="1" height="7" fill="#101010"/>
<rect x="505" y="303" width="11" height="1" fill="#101010"/>
<rect x="507" y="305" width="7" height="1" fill="#101010"/>
<rect x="509" y="307" width="3" height="1" fill="#101010"/>
<text transform="translate(481,221) scale(1.0,1)" fill="#2626B0" font-size="4.6" font-weight="bold" stroke="#2626B0" stroke-width="0.25">7</text>
<text transform="translate(491,221) scale(1.0,1)" fill="#2626B0" font-size="4.6" font-weight="bold" stroke="#2626B0" stroke-width="0.25">1</text>
<text transform="translate(501,221) scale(1.0,1)" fill="#2626B0" font-size="4.6" font-weight="bold" stroke="#2626B0" stroke-width="0.25">5</text>
<text transform="translate(462,242) scale(1.0,1)" fill="#2626B0" font-size="4.6" font-weight="bold" stroke="#2626B0" stroke-width="0.25">3</text>
<text transform="translate(462,269) scale(1.0,1)" fill="#2626B0" font-size="4.6" font-weight="bold" stroke="#2626B0" stroke-width="0.25">2</text>
<text transform="translate(512,255) scale(1.0,1)" fill="#2626B0" font-size="4.6" font-weight="bold" stroke="#2626B0" stroke-width="0.25">6</text>
<text transform="translate(481,292) scale(1.0,1)" fill="#2626B0" font-size="4.6" font-weight="bold" stroke="#2626B0" stroke-width="0.25">4</text>
<text transform="translate(454,130.8) scale(0.9,1)" fill="#1A1A1A" font-size="8.8" stroke="#1A1A1A" stroke-width="0.12">Amp.</text>
<text transform="translate(500,157) scale(0.87,1)" fill="#1A1A1A" font-size="9.4" stroke="#1A1A1A" stroke-width="0.45">V3</text>
<text transform="translate(496.5,188.5) scale(0.87,1)" fill="#1A1A1A" font-size="9.4" stroke="#1A1A1A" stroke-width="0.45">12 V</text>
<text transform="translate(522.5,178) scale(0.87,1)" fill="#D42828" font-size="9.4" stroke="#D42828" stroke-width="0.4">0</text>
<text transform="translate(482,191.5) scale(1.0,1)" fill="#E49A50" font-size="9">13</text>
<text transform="translate(511,226.5) scale(0.86,1)" fill="#2626B0" font-size="9" font-weight="bold" stroke="#2626B0" stroke-width="0.2">U4</text>
<text transform="translate(523.5,254.5) scale(0.87,1)" fill="#D42828" font-size="9.4" stroke="#D42828" stroke-width="0.4">16</text>
<text transform="translate(495.5,286) scale(0.87,1)" fill="#1A1A1A" font-size="9.4" stroke="#1A1A1A" stroke-width="0.45">V4</text>
<text transform="translate(491,316) scale(0.87,1)" fill="#1A1A1A" font-size="9.4" stroke="#1A1A1A" stroke-width="0.45">12 V</text>
<text transform="translate(482,303.5) scale(0.87,1)" fill="#D42828" font-size="9.4" stroke="#D42828" stroke-width="0.4">14</text>
<text transform="translate(512,294.5) scale(0.86,1)" fill="#2626B0" font-size="9" font-weight="bold" stroke="#2626B0" stroke-width="0.2">741</text>
<text transform="translate(512,296.5) scale(0.87,1)" fill="#D42828" font-size="9.4" stroke="#D42828" stroke-width="0.4">0</text>
<text transform="translate(505.5,324.5) scale(0.87,1)" fill="#1A1A1A" font-size="9.4" stroke="#1A1A1A" stroke-width="0.45">R10</text>
<text transform="translate(501.5,345) scale(0.87,1)" fill="#1A1A1A" font-size="9.4" stroke="#1A1A1A" stroke-width="0.45">510kΩ</text>
<text transform="translate(456.5,336.5) scale(0.87,1)" fill="#D42828" font-size="9.4" stroke="#D42828" stroke-width="0.4">15</text>
<text transform="translate(417.5,311) scale(0.87,1)" fill="#1A1A1A" font-size="9.4" stroke="#1A1A1A" stroke-width="0.45">220Ω</text>
<text transform="translate(431,314) scale(0.87,1)" fill="#1A1A1A" font-size="9.4" stroke="#1A1A1A" stroke-width="0.45">R8</text>
<text transform="translate(431,346.5) scale(0.87,1)" fill="#D42828" font-size="9.4" stroke="#D42828" stroke-width="0.4">0</text>
<text transform="translate(458.5,354.5) scale(0.87,1)" fill="#1A1A1A" font-size="9.4" stroke="#1A1A1A" stroke-width="0.45">R9</text>
<text transform="translate(458.5,365) scale(0.87,1)" fill="#1A1A1A" font-size="9.4" stroke="#1A1A1A" stroke-width="0.45">1kΩ</text>
<text transform="translate(456,384.5) scale(0.87,1)" fill="#D42828" font-size="9.4" stroke="#D42828" stroke-width="0.4">0</text>
<rect x="545" y="303" width="21" height="1" fill="#9A2A2A"/>
<rect x="566" y="303" width="5" height="1" fill="#101010"/>
<polyline points="571,303.5 572.25,300.5 574.75,306.5 577.25,300.5 579.75,306.5 582.25,300.5 584.75,306.5 586.5,303.5" stroke="#101010" stroke-width="1" fill="none" stroke-linejoin="miter"/>
<rect x="587" y="303" width="5" height="1" fill="#101010"/>
<rect x="592" y="303" width="56" height="1" fill="#9A2A2A"/>
<rect x="648" y="303" width="10" height="1" fill="#2A2AC4"/>
<rect x="631" y="303" width="1" height="22" fill="#AE5050"/>
<rect x="631" y="325" width="1" height="14" fill="#8C8C8C"/>
<rect x="626" y="338" width="11" height="2" fill="#101010"/>
<path d="M626,345.5 Q631.5,342 637,345.5" stroke="#101010" stroke-width="2" fill="none"/>
<rect x="631" y="346" width="1" height="13" fill="#8C8C8C"/>
<rect x="631" y="359" width="1" height="6" fill="#AE5050"/>
<rect x="631" y="364" width="104" height="1" fill="#9A2A2A"/>
<rect x="631" y="365" width="1" height="20" fill="#AE5050"/>
<rect x="626" y="385" width="11" height="1" fill="#101010"/>
<rect x="628" y="387" width="7" height="1" fill="#101010"/>
<rect x="630" y="389" width="3" height="1" fill="#101010"/>
<path d="M657.5,263.5 L697.5,290.5 L657.5,317.5 Z" stroke="#2A2AC4" fill="none"/>
<rect x="661" y="276" width="4" height="1" fill="#2A2AC4"/>
<text transform="translate(659.5,306.5) scale(1.0,1)" fill="#2626B0" font-size="7.5" font-weight="bold">+</text>
<rect x="642" y="276" width="6" height="1" fill="#9A2A2A"/>
<rect x="648" y="276" width="10" height="1" fill="#2A2AC4"/>
<rect x="641" y="202" width="1" height="75" fill="#AE5050"/>
<rect x="581" y="216" width="10" height="1" fill="#9A2A2A"/>
<rect x="581" y="216" width="1" height="23" fill="#AE5050"/>
<rect x="581" y="239" width="1" height="5" fill="#101010"/>
<rect x="576" y="243" width="11" height="1" fill="#101010"/>
<rect x="578" y="245" width="7" height="1" fill="#101010"/>
<rect x="580" y="247" width="3" height="1" fill="#101010"/>
<rect x="591" y="216" width="5" height="1" fill="#101010"/>
<polyline points="596,216.5 597.25,213.5 599.75,219.5 602.25,213.5 604.75,219.5 607.25,213.5 609.75,219.5 611.5,216.5" stroke="#101010" stroke-width="1" fill="none" stroke-linejoin="miter"/>
<rect x="612" y="216" width="5" height="1" fill="#101010"/>
<rect x="617" y="216" width="25" height="1" fill="#9A2A2A"/>
<rect x="641" y="202" width="32" height="1" fill="#9A2A2A"/>
<rect x="673" y="202" width="5" height="1" fill="#101010"/>
<polyline points="678,202.5 679.1666666666666,199.5 681.5,205.5 683.8333333333334,199.5 686.1666666666666,205.5 688.5,199.5 690.8333333333334,205.5 692.5,202.5" stroke="#101010" stroke-width="1" fill="none" stroke-linejoin="miter"/>
<rect x="693" y="202" width="5" height="1" fill="#101010"/>
<rect x="698" y="202" width="16" height="1" fill="#9A2A2A"/>
<rect x="713" y="202" width="1" height="89" fill="#AE5050"/>
<rect x="698" y="290" width="10" height="1" fill="#2A2AC4"/>
<rect x="708" y="290" width="6" height="1" fill="#9A2A2A"/>
<rect x="713" y="283" width="87" height="1" fill="#9A2A2A"/>
<path d="M723,280 L730,283.5 L723,287 L725,283.5 Z" fill="#20B020"/>
<rect x="667" y="249" width="1" height="20" fill="#2A2AC4"/>
<rect x="667" y="230" width="1" height="19" fill="#AE5050"/>
<rect x="667" y="229" width="12" height="1" fill="#9A2A2A"/>
<rect x="679" y="229" width="5" height="1" fill="#101010"/>
<rect x="683" y="220" width="1" height="19" fill="#101010"/>
<rect x="687" y="224" width="1" height="11" fill="#101010"/>
<rect x="691" y="220" width="1" height="19" fill="#101010"/>
<rect x="694" y="224" width="1" height="11" fill="#101010"/>
<rect x="694" y="229" width="5" height="1" fill="#101010"/>
<rect x="698" y="229" width="1" height="8" fill="#101010"/>
<rect x="693" y="236" width="11" height="1" fill="#101010"/>
<rect x="695" y="238" width="7" height="1" fill="#101010"/>
<rect x="697" y="240" width="3" height="1" fill="#101010"/>
<rect x="667" y="312" width="1" height="18" fill="#2A2AC4"/>
<rect x="677" y="304" width="2" height="26" fill="#9A9AE8"/>
<rect x="687" y="298" width="1" height="32" fill="#2A2AC4"/>
<rect x="667" y="330" width="1" height="8" fill="#AE5050"/>
<rect x="662" y="337" width="6" height="1" fill="#9A2A2A"/>
<rect x="662" y="337" width="1" height="15" fill="#AE5050"/>
<rect x="662" y="351" width="11" height="1" fill="#9A2A2A"/>
<rect x="673" y="343" width="1" height="18" fill="#101010"/>
<rect x="676" y="347" width="1" height="11" fill="#101010"/>
<rect x="679" y="343" width="1" height="18" fill="#101010"/>
<rect x="683" y="347" width="1" height="11" fill="#101010"/>
<rect x="683" y="351" width="5" height="1" fill="#101010"/>
<rect x="687" y="351" width="1" height="7" fill="#101010"/>
<rect x="682" y="357" width="11" height="1" fill="#101010"/>
<rect x="684" y="359" width="7" height="1" fill="#101010"/>
<rect x="686" y="361" width="3" height="1" fill="#101010"/>
<text transform="translate(596.5,211) scale(0.87,1)" fill="#1A1A1A" font-size="9.4" stroke="#1A1A1A" stroke-width="0.45">R15</text>
<text transform="translate(595,231) scale(0.87,1)" fill="#1A1A1A" font-size="9.4" stroke="#1A1A1A" stroke-width="0.45">100Ω</text>
<text transform="translate(583,226) scale(0.87,1)" fill="#D42828" font-size="9.4" stroke="#D42828" stroke-width="0.4">0</text>
<text transform="translate(653.5,201) scale(0.87,1)" fill="#D42828" font-size="9.4" stroke="#D42828" stroke-width="0.4">21</text>
<text transform="translate(678,197) scale(0.87,1)" fill="#1A1A1A" font-size="9.4" stroke="#1A1A1A" stroke-width="0.45">R16</text>
<text transform="translate(678,217) scale(0.87,1)" fill="#1A1A1A" font-size="9.4" stroke="#1A1A1A" stroke-width="0.45">1kΩ</text>
<text transform="translate(668.5,239) scale(0.87,1)" fill="#D42828" font-size="9.4" stroke="#D42828" stroke-width="0.4">26</text>
<text transform="translate(700,229) scale(0.87,1)" fill="#D42828" font-size="9.4" stroke="#D42828" stroke-width="0.4">0</text>
<text transform="translate(679,250) scale(0.87,1)" fill="#1A1A1A" font-size="9.4" stroke="#1A1A1A" stroke-width="0.45">12 V</text>
<text transform="translate(699,261) scale(0.86,1)" fill="#2626B0" font-size="9" font-weight="bold" stroke="#2626B0" stroke-width="0.2">U6</text>
<text transform="translate(571.5,297.5) scale(0.87,1)" fill="#1A1A1A" font-size="9.4" stroke="#1A1A1A" stroke-width="0.45">R14</text>
<text transform="translate(564.5,319) scale(0.87,1)" fill="#1A1A1A" font-size="9.4" stroke="#1A1A1A" stroke-width="0.45">338.6Ω</text>
<text transform="translate(633.5,312.5) scale(0.87,1)" fill="#D42828" font-size="9.4" stroke="#D42828" stroke-width="0.4">20</text>
<text transform="translate(638,334) scale(0.87,1)" fill="#1A1A1A" font-size="9.4" stroke="#1A1A1A" stroke-width="0.45">C6</text>
<text transform="translate(638,344.5) scale(0.87,1)" fill="#1A1A1A" font-size="9.4" stroke="#1A1A1A" stroke-width="0.45">47uF</text>
<text transform="translate(627,337) scale(1.0,1)" fill="#D42828" font-size="7" font-weight="bold">+</text>
<text transform="translate(633.5,371) scale(0.87,1)" fill="#D42828" font-size="9.4" stroke="#D42828" stroke-width="0.4">0</text>
<text transform="translate(699,327.5) scale(0.86,1)" fill="#2626B0" font-size="9" font-weight="bold" stroke="#2626B0" stroke-width="0.2">741</text>
<text transform="translate(672.5,340) scale(0.87,1)" fill="#1A1A1A" font-size="9.4" stroke="#1A1A1A" stroke-width="0.45">V6</text>
<text transform="translate(663,344) scale(0.87,1)" fill="#D42828" font-size="9.4" stroke="#D42828" stroke-width="0.4">25</text>
<text transform="translate(689,350.5) scale(0.87,1)" fill="#D42828" font-size="9.4" stroke="#D42828" stroke-width="0.4">0</text>
<text transform="translate(669,371) scale(0.87,1)" fill="#1A1A1A" font-size="9.4" stroke="#1A1A1A" stroke-width="0.45">12 V</text>
<text transform="translate(780.5,281.5) scale(0.87,1)" fill="#D42828" font-size="9.4" stroke="#D42828" stroke-width="0.4">22</text>
<text transform="translate(724,294) scale(0.88,1)" fill="#2A2A2A" font-size="6.2" stroke="#2A2A2A" stroke-width="0.15">Probe1</text>
<text transform="translate(652,151) scale(0.91,1)" fill="#1A1A1A" font-size="8.6" stroke="#1A1A1A" stroke-width="0.12">filter low- pass&#160; 10Khz</text>
<text transform="translate(431,273.5) scale(0.87,1)" fill="#D42828" font-size="9.4" stroke="#D42828" stroke-width="0.4">12</text>
<rect x="799" y="141" width="1" height="60" fill="#3A3A3A"/>
<text transform="translate(669,259) scale(1.0,1)" fill="#2626B0" font-size="4.6" font-weight="bold" stroke="#2626B0" stroke-width="0.25">4</text>
<text transform="translate(650,281) scale(1.0,1)" fill="#2626B0" font-size="4.6" font-weight="bold" stroke="#2626B0" stroke-width="0.25">2</text>
<text transform="translate(650,308) scale(1.0,1)" fill="#2626B0" font-size="4.6" font-weight="bold" stroke="#2626B0" stroke-width="0.25">3</text>
<text transform="translate(669,326) scale(1.0,1)" fill="#2626B0" font-size="4.6" font-weight="bold" stroke="#2626B0" stroke-width="0.25">7</text>
<text transform="translate(680,326) scale(1.0,1)" fill="#2626B0" font-size="4.6" font-weight="bold" stroke="#2626B0" stroke-width="0.25">1</text>
<text transform="translate(689,326) scale(1.0,1)" fill="#2626B0" font-size="4.6" font-weight="bold" stroke="#2626B0" stroke-width="0.25">5</text>
<text transform="translate(701,294) scale(1.0,1)" fill="#2626B0" font-size="4.6" font-weight="bold" stroke="#2626B0" stroke-width="0.25">6</text>
<circle cx="185.5" cy="114.5" r="1.5" fill="#9A2A2A"/>
<circle cx="185.5" cy="128.5" r="1.5" fill="#9A2A2A"/>
<circle cx="266.5" cy="121.5" r="1.5" fill="#9A2A2A"/>
<circle cx="185.5" cy="209.5" r="1.5" fill="#9A2A2A"/>
<circle cx="266.5" cy="209.5" r="1.5" fill="#9A2A2A"/>
<circle cx="190.5" cy="337.5" r="1.5" fill="#9A2A2A"/>
<circle cx="190.5" cy="351.5" r="1.5" fill="#9A2A2A"/>
<circle cx="271.5" cy="344.5" r="1.5" fill="#9A2A2A"/>
<circle cx="190.5" cy="432.5" r="1.5" fill="#9A2A2A"/>
<circle cx="271.5" cy="432.5" r="1.5" fill="#9A2A2A"/>
<circle cx="104.5" cy="344.5" r="1.5" fill="#9A2A2A"/>
<circle cx="104.5" cy="364.5" r="1.5" fill="#9A2A2A"/>
<circle cx="134.5" cy="465.5" r="1.5" fill="#9A2A2A"/>
<circle cx="428.5" cy="243.5" r="1.5" fill="#9A2A2A"/>
<circle cx="454.5" cy="330.5" r="1.5" fill="#9A2A2A"/>
<circle cx="525.5" cy="256.5" r="1.5" fill="#9A2A2A"/>
<circle cx="631.5" cy="303.5" r="1.5" fill="#9A2A2A"/>
<circle cx="631.5" cy="364.5" r="1.5" fill="#9A2A2A"/>
<circle cx="641.5" cy="216.5" r="1.5" fill="#9A2A2A"/>
<circle cx="713.5" cy="283.5" r="1.5" fill="#9A2A2A"/>
</g></svg>
<div class="a" id="probe">
<div style="top:4px">V: 6.23 V</div>
<div style="top:17px">V(p-p): 13.3 mV</div>
<div style="top:30px">V(rms): 0 V</div>
<div style="top:43px">V(dc): 6.23 V</div>
<div style="top:56px">I:</div>
<div style="top:69px">I(p-p):</div>
<div style="top:82px">I(rms):</div>
<div style="top:95px">I(dc):</div>
<div style="top:108px">Freq.:</div>
</div>
<!-- scrollbar -->
<div class="a" style="left:3px;top:544px;width:797px;height:17px;background:linear-gradient(#F2F1EA,#FDFDFA 60%,#F7F6F0)"></div>
<div class="a" style="left:3px;top:546px;width:11px;height:14px;background:linear-gradient(#D2DEFA,#B8CCF6);border-radius:2px;box-shadow:0 1px 0 #9DB3E0"></div>
<svg class="a" style="left:3px;top:546px" width="11" height="14"><polyline points="7,3.5 4,7 7,10.5" stroke="#4D6185" stroke-width="1.6" fill="none"/></svg>
<div class="a" style="left:156px;top:545px;width:398px;height:16px;background:#C9D2E6;border-radius:3px"></div><div class="a" style="left:156px;top:545px;width:397px;height:15px;background:#FFFFFF;border-radius:3px"></div><div class="a" style="left:157px;top:546px;width:395px;height:13px;background:linear-gradient(#C4D3FB,#B6CAF7);border-radius:2px"></div>
<div class="a" style="left:0;top:561px;width:800px;height:2px;background:#FBFAF5"></div>
<!-- tabs -->
<div class="a" style="left:76px;top:568px;width:724px;height:1px;background:#5E5C52"></div>
<div class="a" style="left:0;top:568px;width:77px;height:24px;background:#EEECE2;border-right:1px solid #3A3A34;border-bottom:2px solid #3A3A34;border-bottom-right-radius:3px;border-bottom-left-radius:3px;box-sizing:border-box"></div>
<svg class="a" style="left:3px;top:572px" width="13" height="16"><path d="M0.5,0.5 H8.5 L12.5,4.5 V15.5 H0.5 Z" fill="#fff" stroke="#111"/><path d="M8.5,0.5 V4.5 H12.5" fill="none" stroke="#111"/><path d="M3.5,3 V14 M3.5,5.5 H7.5 V11.5 H4 M6,9 H9" stroke="#D03030" fill="none"/><path d="M5,13 L8,15 M7,12 L5,14" stroke="#111" stroke-width="0.8" fill="none"/></svg>
<div class="a" style="left:18px;top:574px;font-size:11px;color:#2A2A2A;transform-origin:0 0;transform:scaleX(0.74);white-space:nowrap;will-change:transform">VCOconmixer *</div>
<div class="a" style="left:0;top:596px;width:800px;height:1px;background:#9C998A"></div>
</div></body></html>
